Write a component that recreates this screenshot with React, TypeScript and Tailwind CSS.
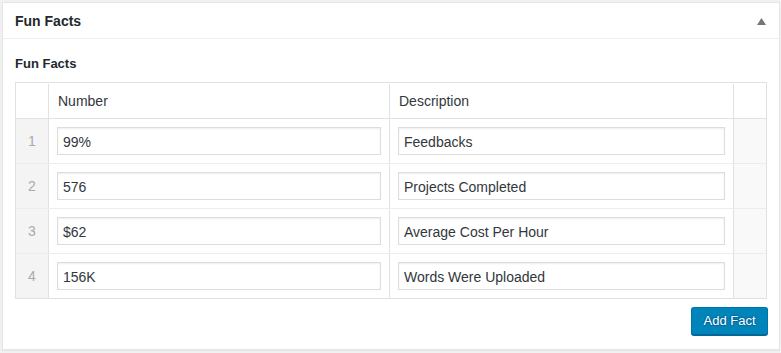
const rows = [
  { number: '99%', description: 'Feedbacks' },
  { number: '576', description: 'Projects Completed' },
  { number: '$62', description: 'Average Cost Per Hour' },
  { number: '156K', description: 'Words Were Uploaded' },
];

const inputCls =
  'w-full h-[28px] px-[5px] pt-[1px] border border-[#dddddd] bg-white text-[14px] text-[#32373c] shadow-[inset_0_1px_2px_rgba(0,0,0,0.07)] outline-none';

export default function App() {
  return (
    <div
      className="w-[781px] h-[353px] bg-[#f1f1f1] pl-[2px] pt-[2px] overflow-hidden"
      style={{ fontFamily: '"Liberation Sans", Arial, sans-serif' }}
    >
      <div className="w-[778px] h-[348px] bg-white border border-[#e5e5e5] shadow-[0_1px_1px_rgba(0,0,0,0.04)]">
        {/* postbox header */}
        <div className="h-[36px] border-b border-[#eeeeee] flex items-center justify-between pl-[12px] pr-[13px] pt-[1px]">
          <h2 className="text-[14px] font-bold text-[#23282d]">Fun Facts</h2>
          <svg width="9" height="7" viewBox="0 0 9 7" className="mt-[1px]">
            <polygon points="4.5,0 9,7 0,7" fill="#72777c" />
          </svg>
        </div>

        <div className="px-[12px] pt-[17px]">
          <div className="text-[13px] font-bold text-[#23282d] leading-[16px] mb-[10px]">Fun Facts</div>

          {/* repeater table */}
          <div className="w-[752px] border border-[#e1e1e1] text-[14px]">
            <div className="flex h-[36px] border-b border-[#e1e1e1] text-[#32373c] pt-[1px]">
              <div className="w-[32px]" />
              <div className="w-[341px] border-l border-[#e1e1e1] flex items-center pl-[9px]">Number</div>
              <div className="w-[344px] border-l border-[#e1e1e1] flex items-center pl-[9px]">Description</div>
              <div className="flex-1 border-l border-[#e1e1e1]" />
            </div>
            {rows.map((row, i) => (
              <div
                key={i}
                className={i === 0 ? 'flex h-[44px]' : 'flex h-[45px] border-t border-[#ededed]'}
              >
                <div className="w-[32px] bg-[#f4f4f4] flex items-center justify-center text-[#aaaaaa] pt-[1px]">{i + 1}</div>
                <div className="w-[341px] border-l border-[#e1e1e1] flex items-center px-[8px]">
                  <input className={inputCls} defaultValue={row.number} />
                </div>
                <div className="w-[344px] border-l border-[#e1e1e1] flex items-center px-[8px]">
                  <input className={inputCls} defaultValue={row.description} />
                </div>
                <div className="flex-1 border-l border-[#e1e1e1] bg-[#f9f9f9]" />
              </div>
            ))}
          </div>

          <div className="flex justify-end mt-[8px]">
            <button className="h-[28px] w-[77px] -mr-[1px] rounded-[3px] bg-[#0085ba] border border-[#0073aa] border-b-[#006799] shadow-[0_1px_0_#006799] text-white text-[13px] [text-shadow:0_-1px_1px_#006799,1px_0_1px_#006799,0_1px_1px_#006799,-1px_0_1px_#006799,0_0_0.4px_#ffffff]">
              Add Fact
            </button>
          </div>
        </div>
      </div>
    </div>
  );
}
